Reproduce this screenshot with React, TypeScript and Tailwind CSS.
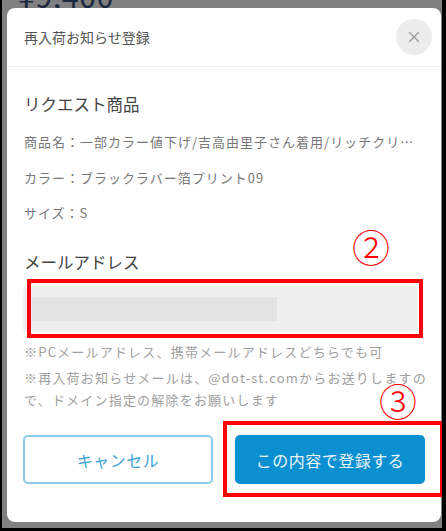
import React from "react";
import { X } from "lucide-react";

const jp = { fontFamily: '"Noto Sans CJK JP", "Noto Sans", sans-serif' };

export default function App() {
    return (
        <div
            className="relative w-[446px] h-[531px] overflow-hidden bg-[#808080] border-l-2 border-r-4 border-b-[3px] border-black"
            style={jp}
        >
            {/* page behind the overlay */}
            <div className="absolute left-[16px] top-[-21px] text-[30px] leading-[32px] text-[#1c2740] tracking-wide">
                ¥9,400
            </div>

            {/* Modal */}
            <div className="relative ml-[5px] mt-[8px] w-[434px] h-[514px] bg-white rounded-[8px] flex flex-col">
                {/* Header */}
                <div className="h-[59px] flex items-center justify-between pl-[17px] pr-[9px] border-b border-[#efefef]">
                    <span className="text-[14px] text-[#555]">再入荷お知らせ登録</span>
                    <button className="w-[36px] h-[36px] rounded-full bg-[#ececec] flex items-center justify-center text-[#9a9a9a]">
                        <X size={18} strokeWidth={1.6} />
                    </button>
                </div>

                {/* Body */}
                <div className="pl-[17px] pt-[25px] flex flex-col">
                    <h2 className="text-[16.5px] leading-[24px] text-[#444]">リクエスト商品</h2>
                    <p className="mt-[14px] text-[13px] leading-[24px] text-[#777] whitespace-nowrap tracking-[1px]">
                        商品名：一部カラー値下げ/吉高由里子さん着用/リッチクリ…
                    </p>
                    <p className="mt-[12px] text-[13px] leading-[24px] text-[#777] tracking-[1px]">カラー：ブラックラバー箔プリント09</p>
                    <p className="mt-[11px] text-[13px] leading-[24px] text-[#777] tracking-[1px]">サイズ：S</p>

                    <h2 className="mt-[25px] text-[16.5px] leading-[24px] text-[#444]">メールアドレス</h2>
                    <div className="mt-[13px] w-[393px] h-[44px] bg-[#eeeeee] rounded-[3px] shadow-[0_0_3px_rgba(0,0,0,0.12)] flex items-center pl-[8px]">
                        <div className="w-[245px] h-[24px] bg-[#e3e3e3]" />
                    </div>

                    <p className="mt-[10px] text-[13px] leading-[22px] text-[#a0a0a0] tracking-[1.2px] whitespace-nowrap">
                        ※PCメールアドレス、携帯メールアドレスどちらでも可
                    </p>
                    <p className="mt-[4px] text-[13px] leading-[22px] text-[#a0a0a0] tracking-[1.2px] whitespace-nowrap">
                        ※再入荷お知らせメールは、@dot-st.comからお送りしますの
                        <br />
                        で、ドメイン指定の解除をお願いします
                    </p>
                </div>

                {/* Actions */}
                <div className="mt-[24px] px-[16px] grid grid-cols-2 gap-[22px]">
                    <button className="h-[49px] rounded-[5px] border-2 border-[#8ccbea] text-[#3ea2d6] text-[16px] tracking-[0.5px]">
                        キャンセル
                    </button>
                    <button className="h-[49px] rounded-[5px] bg-[#0a8fd0] text-[#eaf6fc] text-[16px] tracking-[0.5px]">
                        この内容で登録する
                    </button>
                </div>
            </div>

            {/* Annotations */}
            <div className="absolute left-[25px] top-[279px] w-[396px] h-[59px] border-4 border-[#ff0000]" />
            <div className="absolute left-[221px] top-[421px] w-[221px] h-[76px] border-4 border-[#ff0000]" />
            <span className="absolute left-[350px] top-[226px] text-[38px] leading-[40px] font-light text-[#ff0000]">②</span>
            <span className="absolute left-[377px] top-[380px] text-[38px] leading-[40px] font-light text-[#ff0000]">③</span>
        </div>
    );
}
